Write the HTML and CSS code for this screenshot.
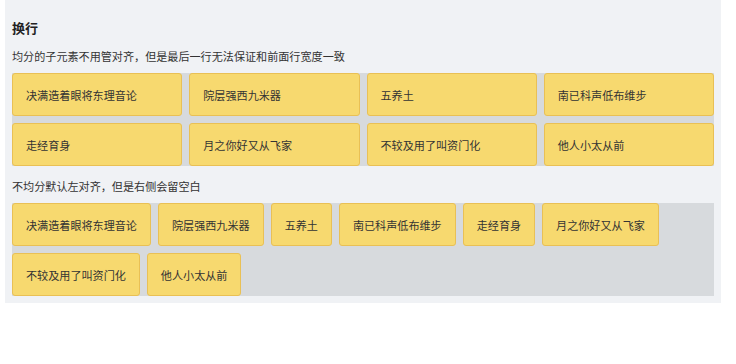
FILE: index.html
```html
<!DOCTYPE html>
<html lang="zh-CN">
<head>
    <meta charset="UTF-8" />
    <meta name="viewport" content="width=device-width, initial-scale=1.0" />
    <title>换行</title>
    <link rel="stylesheet" href="styles.css">
</head>
<body>

<div class="panel">
    <h3>换行</h3>
    <p class="tip">均分的子元素不用管对齐，但是最后一行无法保证和前面行宽度一致</p>
    <div class="grid">
        <div class="item">决满造着眼将东理音论</div>
        <div class="item">院层强西九米器</div>
        <div class="item">五养土</div>
        <div class="item">南已科声低布维步</div>
        <div class="item">走经育身</div>
        <div class="item">月之你好又从飞家</div>
        <div class="item">不较及用了叫资门化</div>
        <div class="item">他人小太从前</div>
    </div>
    <p class="tip">不均分默认左对齐，但是右侧会留空白</p>
    <div class="wrap">
        <div class="item">决满造着眼将东理音论</div>
        <div class="item">院层强西九米器</div>
        <div class="item">五养土</div>
        <div class="item">南已科声低布维步</div>
        <div class="item">走经育身</div>
        <div class="item">月之你好又从飞家</div>
        <div class="item">不较及用了叫资门化</div>
        <div class="item">他人小太从前</div>
    </div>
</div>

</body>
</html>
```

FILE: styles.css
```css
body {
    margin: 0;
    background: #fff;
    font-family: "Noto Sans CJK SC", "Noto Sans", sans-serif;
    color: #333;
}
.panel {
    width: 716px;
    margin-left: 5px;
    padding: 0 7px 7px;
    box-sizing: border-box;
    background: #f0f2f5;
}
h3 {
    margin: 0;
    padding-top: 20px;
    font-size: 13px;
    line-height: 16px;
    font-weight: bold;
    color: #222;
}
.tip {
    margin: 12px 0 9px;
    font-size: 11.1px;
    line-height: 16px;
}
.grid {
    display: grid;
    grid-template-columns: repeat(4, 1fr);
    gap: 7px;
    background: #d7dadd;
}
.wrap {
    display: flex;
    flex-wrap: wrap;
    gap: 7px;
    background: #d7dadd;
}
.item {
    height: 43px;
    box-sizing: border-box;
    display: flex;
    align-items: center;
    padding: 0 13px;
    background: #f7d96f;
    border: 1px solid #e9c055;
    border-radius: 3px;
    font-size: 11.1px;
    color: #333;
    white-space: nowrap;
}
```
